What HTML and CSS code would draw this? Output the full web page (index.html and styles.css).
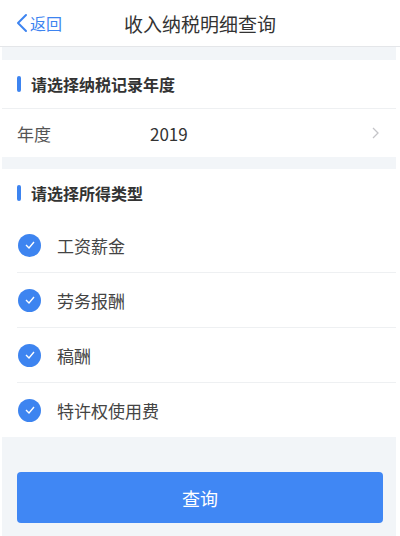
FILE: index.html
```html
<!DOCTYPE html>
<html lang="zh-CN">
<head>
<meta charset="UTF-8" />
<meta name="viewport" content="width=device-width, initial-scale=1" />
<title>收入纳税明细查询</title>
<link rel="stylesheet" href="styles.css">
</head>
<body>

<header class="navbar">
  <a class="back" href="#">
    <svg width="12" height="20" viewBox="0 0 12 20"><path d="M10 2 L2 10 L10 18" fill="none" stroke="#3d84f0" stroke-width="2" stroke-linecap="round" stroke-linejoin="round"/></svg>
    <span>返回</span>
  </a>
  <h1 class="title">收入纳税明细查询</h1>
</header>

<main class="page">
  <section class="group">
    <div class="group-title lined"><span class="bar"></span>请选择纳税记录年度</div>
    <div class="row year-row">
      <span class="row-label">年度</span>
      <span class="row-value">2019</span>
      <svg class="chevron" width="7" height="12" viewBox="0 0 7 12"><path d="M1 1 L6 6 L1 11" fill="none" stroke="#c4c4c8" stroke-width="1.3"/></svg>
    </div>
  </section>

  <section class="group">
    <div class="group-title"><span class="bar"></span>请选择所得类型</div>
    <ul class="checklist">
      <li class="check-item"><span class="check"><svg width="12" height="10" viewBox="0 0 12 10"><path d="M2 5 L5 8 L10 2" fill="none" stroke="#fff" stroke-width="1.4"/></svg></span>工资薪金</li>
      <li class="check-item"><span class="check"><svg width="12" height="10" viewBox="0 0 12 10"><path d="M2 5 L5 8 L10 2" fill="none" stroke="#fff" stroke-width="1.4"/></svg></span>劳务报酬</li>
      <li class="check-item"><span class="check"><svg width="12" height="10" viewBox="0 0 12 10"><path d="M2 5 L5 8 L10 2" fill="none" stroke="#fff" stroke-width="1.4"/></svg></span>稿酬</li>
      <li class="check-item"><span class="check"><svg width="12" height="10" viewBox="0 0 12 10"><path d="M2 5 L5 8 L10 2" fill="none" stroke="#fff" stroke-width="1.4"/></svg></span>特许权使用费</li>
    </ul>
  </section>

  <div class="actions">
    <button class="submit">查询</button>
  </div>
</main>

</body>
</html>
```

FILE: styles.css
```css
body {
  margin: 0;
  background: #fff;
  font-family: "Noto Sans CJK SC", "Noto Sans", sans-serif;
  color: #333;
}
.navbar {
  height: 46px;
  display: flex;
  align-items: center;
  justify-content: center;
  position: relative;
  border-bottom: 1px solid #e4e6e9;
  background: #fff;
}
.back {
  position: absolute;
  left: 16px;
  top: 12px;
  display: flex;
  align-items: center;
  gap: 2px;
  color: #3d84f0;
  text-decoration: none;
  font-size: 16px;
  line-height: 22px;
}
.title {
  margin: 0;
  font-size: 19px;
  font-weight: normal;
  color: #333;
}
.page {
  margin: 0 4px 0 2px;
  background: #f2f5f8;
  padding-top: 13px;
  min-height: 476px;
}
.group {
  background: #fff;
  margin-bottom: 12px;
}
.group-title {
  height: 48px;
  display: flex;
  align-items: center;
  padding-left: 15px;
  font-size: 16px;
  font-weight: bold;
  color: #333;
  border-bottom: 1px solid transparent;
}
.group-title.lined {
  border-bottom-color: #eef0f2;
}
.bar {
  width: 4px;
  height: 16px;
  border-radius: 2px;
  background: #3d84f0;
  margin-right: 10px;
}
.row {
  height: 48px;
  display: flex;
  align-items: center;
  padding: 0 17px 0 15px;
  font-size: 17px;
}
.row-label {
  width: 133px;
  color: #555;
}
.row-value {
  flex: 1;
  color: #333;
}
.checklist {
  list-style: none;
  margin: 0;
  padding: 0 0 0 15px;
}
.check-item {
  height: 54px;
  display: flex;
  align-items: center;
  font-size: 17px;
  color: #444;
  border-bottom: 1px solid #eef0f2;
}
.check-item:last-child {
  border-bottom: none;
}
.check {
  width: 23px;
  height: 23px;
  border-radius: 50%;
  background: #3d84f0;
  display: flex;
  align-items: center;
  justify-content: center;
  margin-left: 1px;
  margin-right: 16px;
}
.actions {
  padding: 23px 13px 14px 15px;
}
.submit {
  width: 100%;
  height: 51px;
  border: none;
  border-radius: 4px;
  background: #4087f4;
  color: #fff;
  font-family: inherit;
  font-size: 18px;
}
```
